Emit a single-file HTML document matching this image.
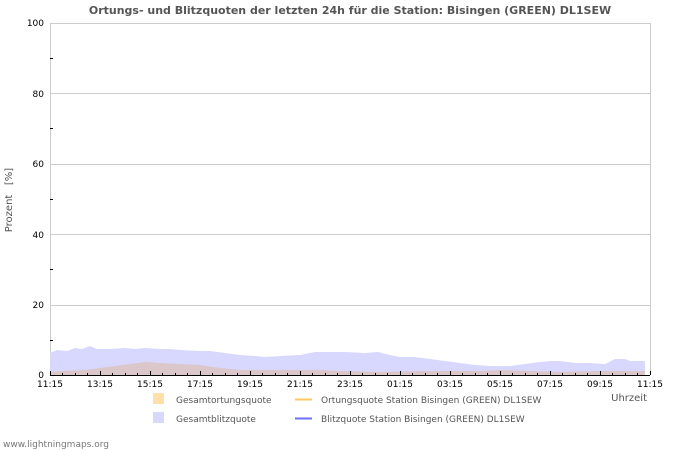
<!DOCTYPE html>
<html><head><style>body{margin:0;background:#fff}svg{display:block;font-family:"DejaVu Sans","Liberation Sans",sans-serif}</style></head><body>
<svg width="700" height="450" xmlns="http://www.w3.org/2000/svg">
<text x="350" y="14" text-anchor="middle" font-size="11" font-weight="bold" fill="#555">Ortungs- und Blitzquoten der letzten 24h für die Station: Bisingen (GREEN) DL1SEW</text>
<g stroke="#ccc" stroke-width="1">
<line x1="50" y1="23.5" x2="650" y2="23.5"/><line x1="50" y1="93.5" x2="650" y2="93.5"/><line x1="50" y1="164.5" x2="650" y2="164.5"/><line x1="50" y1="234.5" x2="650" y2="234.5"/><line x1="50" y1="305.5" x2="650" y2="305.5"/>
<line x1="650.5" y1="23" x2="650.5" y2="375"/><line x1="50.5" y1="23" x2="50.5" y2="375"/>
</g>
<polygon fill="#d8d8ff" points="50,375 50,353 57,350 67,351 75,348 82,349 90,346 97,349 110,349 125,348 135,349 145,348 160,349 170,349 180,350 200,351 210,351 225,353 240,355 255,356 265,357 280,356 300,355 315,352 345,352 365,353 378,352 390,355 400,357 415,357 430,359 445,361 460,363 475,365 490,366 510,366 525,364 540,362 550,361 560,361 575,363 590,363 605,364 615,359 625,359 630,361 645,361 645,375"/>
<polygon fill="#dbc6c9" points="50,375 50,372 60,371 85,370 100,368 115,366 130,364 145,362 160,363 180,364 200,365 220,368 240,370 260,370 290,370 320,370 340,371 380,372 430,371 480,371 500,370 530,371 560,372 600,371 645,371 645,375"/>
<line x1="50" y1="375.5" x2="650" y2="375.5" stroke="#000"/>
<g font-size="9" fill="#000" text-anchor="end">
<text x="44" y="26">100</text><text x="44" y="97">80</text><text x="44" y="167">60</text><text x="44" y="238">40</text><text x="44" y="308">20</text><text x="44" y="378">0</text>
</g>
<g stroke="#000">
<line x1="50" y1="58.5" x2="53" y2="58.5"/><line x1="50" y1="128.5" x2="53" y2="128.5"/><line x1="50" y1="199.5" x2="53" y2="199.5"/><line x1="50" y1="269.5" x2="53" y2="269.5"/><line x1="50" y1="340.5" x2="53" y2="340.5"/>
</g>
<text transform="translate(12,200) rotate(-90)" text-anchor="middle" font-size="10" fill="#555">Prozent&#160;&#160;&#160;[%]</text>
<g font-size="9" fill="#000" text-anchor="middle">
<text x="50" y="387">11:15</text><text x="100" y="387">13:15</text><text x="150" y="387">15:15</text><text x="200" y="387">17:15</text><text x="250" y="387">19:15</text><text x="300" y="387">21:15</text><text x="350" y="387">23:15</text><text x="400" y="387">01:15</text><text x="450" y="387">03:15</text><text x="500" y="387">05:15</text><text x="550" y="387">07:15</text><text x="600" y="387">09:15</text><text x="650" y="387">11:15</text>
</g>
<path stroke="#000" d="M50.5 371v4M62.5 373v2M75.5 373v2M87.5 373v2M100.5 371v4M112.5 373v2M125.5 373v2M137.5 373v2M150.5 371v4M162.5 373v2M175.5 373v2M187.5 373v2M200.5 371v4M212.5 373v2M225.5 373v2M237.5 373v2M250.5 371v4M262.5 373v2M275.5 373v2M287.5 373v2M300.5 371v4M312.5 373v2M325.5 373v2M337.5 373v2M350.5 371v4M362.5 373v2M375.5 373v2M387.5 373v2M400.5 371v4M412.5 373v2M425.5 373v2M437.5 373v2M450.5 371v4M462.5 373v2M475.5 373v2M487.5 373v2M500.5 371v4M512.5 373v2M525.5 373v2M537.5 373v2M550.5 371v4M562.5 373v2M575.5 373v2M587.5 373v2M600.5 371v4M612.5 373v2M625.5 373v2M637.5 373v2M650.5 371v4"/>
<text x="647" y="401" text-anchor="end" font-size="10" fill="#555">Uhrzeit</text>
<rect x="153" y="393" width="11" height="11" fill="#ffe0a8"/>
<rect x="153" y="412" width="11" height="11" fill="#d8d8ff"/>
<line x1="295" y1="399.5" x2="312" y2="399.5" stroke="#ffc860" stroke-width="2"/>
<line x1="295" y1="418.5" x2="312" y2="418.5" stroke="#7070ff" stroke-width="2"/>
<g font-size="9" fill="#555">
<text x="176" y="403">Gesamtortungsquote</text><text x="176" y="422">Gesamtblitzquote</text>
<text x="321" y="403">Ortungsquote Station Bisingen (GREEN) DL1SEW</text><text x="321" y="422">Blitzquote Station Bisingen (GREEN) DL1SEW</text>
<text x="3" y="447" fill="#777">www.lightningmaps.org</text>
</g>
</svg>
</body></html>
